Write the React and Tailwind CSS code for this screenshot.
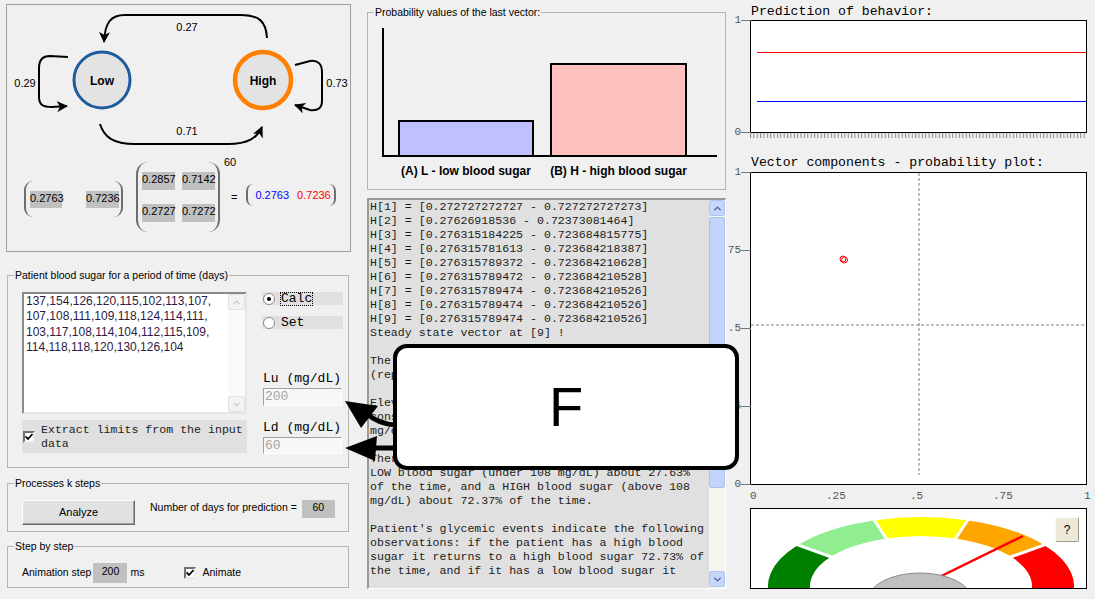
import { ChevronUp, ChevronDown } from 'lucide-react';

const sugarLines = [
  '137,154,126,120,115,102,113,107,',
  '107,108,111,109,118,124,114,111,',
  '103,117,108,114,104,112,115,109,',
  '114,118,118,120,130,126,104',
];

const logLines = [
  'H[1] = [0.272727272727 - 0.727272727273]',
  'H[2] = [0.27626918536 - 0.72373081464]',
  'H[3] = [0.276315184225 - 0.723684815775]',
  'H[4] = [0.276315781613 - 0.723684218387]',
  'H[5] = [0.276315789372 - 0.723684210628]',
  'H[6] = [0.276315789472 - 0.723684210528]',
  'H[7] = [0.276315789474 - 0.723684210526]',
  'H[8] = [0.276315789474 - 0.723684210526]',
  'H[9] = [0.276315789474 - 0.723684210526]',
  'Steady state vector at [9] !',
  '',
  'The steady state vector was reached quickly',
  '(representing the long-term behavior).',
  '',
  'Elevated blood sugar limit was calculated as',
  'considering the median of the input values: 108',
  'mg/dL.',
  '',
  'Therefore, the patient is expected to have a',
  'LOW blood sugar (under 108 mg/dL) about 27.63%',
  'of the time, and a HIGH blood sugar (above 108',
  'mg/dL) about 72.37% of the time.',
  '',
  "Patient's glycemic events indicate the following",
  'observations: if the patient has a high blood',
  'sugar it returns to a high blood sugar 72.73% of',
  'the time, and if it has a low blood sugar it',
];

function CheckBox() {
  return (
    <span className="w-[12px] h-[12px] bg-white border-2 border-t-[#707070] border-l-[#707070] border-r-[#e8e8e8] border-b-[#e8e8e8] flex items-center justify-center shrink-0">
      <svg width="8" height="8" viewBox="0 0 8 8">
        <path d="M0.5 3.5 L3 6 L7.5 1" stroke="#000" strokeWidth="1.8" fill="none" />
      </svg>
    </span>
  );
}

function Radio({ checked }) {
  return (
    <span className="w-[12px] h-[12px] rounded-full bg-white border border-[#8a8a8a] flex items-center justify-center shrink-0">
      {checked && <span className="w-[4px] h-[4px] rounded-full bg-black" />}
    </span>
  );
}

function Diagram() {
  return (
    <svg width="343" height="150" viewBox="7 5 343 150" className="shrink-0">
      <defs>
        <marker id="ah" viewBox="0 0 11 11" refX="10" refY="5.5" markerWidth="11" markerHeight="11" markerUnits="userSpaceOnUse" orient="auto">
          <path d="M0,0 L11,5.5 L0,11 L3,5.5 z" fill="#000" />
        </marker>
      </defs>
      <g fill="none" stroke="#000" strokeWidth="2">
        <path d="M267,38 C266,21 259,15 240,15 L125,15 C111,15 105,22 104,42" markerEnd="url(#ah)" />
        <path d="M100,124 C104,137 113,144 135,144 L228,144 C248,144 257,138 262,127" markerEnd="url(#ah)" />
        <path d="M68,57 L50,56 C42,56 39,60 39,68 L39,97 C39,105 43,107 52,107 L67,106" markerEnd="url(#ah)" />
        <path d="M295,65 L310,61 C318,60 322,64 322,72 L322,101 C322,108 318,111 310,110 L295,105" markerEnd="url(#ah)" />
      </g>
      <circle cx="102" cy="80" r="28" fill="#e3e3e3" stroke="#1e5b9c" strokeWidth="3" />
      <circle cx="263" cy="80" r="28" fill="#e3e3e3" stroke="#ff8000" strokeWidth="4.5" />
      <g fontSize="12" fontWeight="bold" textAnchor="middle">
        <text x="102" y="85">Low</text>
        <text x="263" y="85">High</text>
      </g>
      <g fontSize="11" textAnchor="middle">
        <text x="187" y="31">0.27</text>
        <text x="187" y="135">0.71</text>
        <text x="25" y="87">0.29</text>
        <text x="337" y="87">0.73</text>
      </g>
    </svg>
  );
}

function MatrixRow() {
  return (
    <div className="mt-[7px] h-[70px] pl-[17px] flex items-center text-[11px] leading-[14px]">
      <div className="mt-[4px] w-[99px] h-[36px] border-x-2 border-[#6e6e6e] rounded-[9px] flex items-center pl-[4px]">
        <div className="w-[32px] h-[17px] bg-[#c0c0c0]">0.2763</div>
        <div className="ml-[24px] w-[33px] h-[17px] bg-[#c0c0c0]">0.7236</div>
      </div>
      <div className="relative ml-[13px] w-[84px] h-[70px] border-x-2 border-[#6e6e6e] rounded-[12px] pt-[10px] pl-[4px] grid grid-cols-[33px_33px] gap-x-[7px] gap-y-[14px] content-start">
        <div className="h-[18px] bg-[#c0c0c0]">0.2857</div>
        <div className="h-[18px] bg-[#c0c0c0]">0.7142</div>
        <div className="h-[18px] bg-[#c0c0c0]">0.2727</div>
        <div className="h-[18px] bg-[#c0c0c0]">0.7272</div>
        <span className="absolute left-[86px] top-[-7px] text-[11px]">60</span>
      </div>
      <div className="ml-[11px]">=</div>
      <div className="ml-[9px] mb-[5px] w-[90px] h-[22px] border-x-2 border-[#6e6e6e] rounded-[7px] flex items-center pl-[7px]">
        <span className="text-[#0000ff]">0.2763</span>
        <span className="ml-[8px] text-[#ff0000]">0.7236</span>
      </div>
    </div>
  );
}

function Gauge() {
  const cx = 170, cy = 77;
  const pt = (rx, ry, deg) => [cx + rx * Math.cos((deg * Math.PI) / 180), cy - ry * Math.sin((deg * Math.PI) / 180)];
  const seg = (a1, a2) => {
    const [x1, y1] = pt(153, 69, a1);
    const [x2, y2] = pt(153, 69, a2);
    const [x3, y3] = pt(111, 50, a2);
    const [x4, y4] = pt(111, 50, a1);
    return `M${x1},${y1} A153,69 0 0 1 ${x2},${y2} L${x3},${y3} A111,50 0 0 0 ${x4},${y4} Z`;
  };
  const parts = [
    [195, 144, '#008000'],
    [144, 108, '#90ee90'],
    [108, 72, '#ffff00'],
    [72, 36, '#ffa500'],
    [36, -15, '#ff0000'],
  ];
  return (
    <svg width="335" height="79" className="block">
      {parts.map(([a, b, c]) => (
        <path key={c} d={seg(a, b)} fill={c} />
      ))}
      {[144, 108, 72, 36].map((a) => {
        const [x1, y1] = pt(108, 48, a);
        const [x2, y2] = pt(157, 72, a);
        return <line key={a} x1={x1} y1={y1} x2={x2} y2={y2} stroke="#fff" strokeWidth="3" />;
      })}
      <line x1="170" y1="77" x2="272" y2="27" stroke="#ff0000" strokeWidth="2.5" />
      <ellipse cx="169" cy="91" rx="52" ry="27" fill="#c0c0c0" stroke="#8c8c8c" />
    </svg>
  );
}

function YLabel({ top, text }) {
  return (
    <div className="absolute right-full -translate-y-1/2 flex items-center font-['Liberation_Mono',monospace] text-[11px] leading-[12px] text-[#555]" style={{ top }}>
      <span>{text}</span>
      <span className="w-[10px] h-[1px] bg-[#777]" />
    </div>
  );
}

export default function App() {
  return (
    <div className="relative w-[1095px] h-[599px] overflow-hidden bg-[#f0f0f0] flex font-['Liberation_Sans',Arial,sans-serif] text-black">
      {/* left column */}
      <div className="w-[345px] ml-[6px] mt-[4px] flex flex-col shrink-0">
        <div className="h-[248px] border border-[#a0a0a0] flex flex-col">
          <Diagram />
          <MatrixRow />
        </div>

        <fieldset className="mt-[16px] ml-[1px] mr-[2px] border border-[#b5b5ab] pb-[13px]">
          <legend className="ml-[6px] px-[1px] text-[10.5px] leading-[14px]">Patient blood sugar for a period of time (days)</legend>
          <div className="flex pl-[14px]">
            <div className="w-[225px]">
              <div className="mt-[10px] h-[122px] border-2 border-t-[#8a8a8a] border-l-[#8a8a8a] border-r-[#e6e6e6] border-b-[#e6e6e6] bg-white flex">
                <div className="flex-1 pl-[2px] text-[12px] leading-[15.3px] text-[#2f1a45]">
                  {sugarLines.map((l) => (
                    <div key={l}>{l}</div>
                  ))}
                </div>
                <div className="w-[17px] flex flex-col bg-[#fafaf8]">
                  <div className="h-[16px] rounded-[2px] border border-[#e2e2de] bg-[#f3f3f1] flex items-center justify-center">
                    <ChevronUp size={11} strokeWidth={2.5} className="text-[#c6c6c0]" />
                  </div>
                  <div className="flex-1" />
                  <div className="h-[16px] rounded-[2px] border border-[#e2e2de] bg-[#f3f3f1] flex items-center justify-center">
                    <ChevronDown size={11} strokeWidth={2.5} className="text-[#c6c6c0]" />
                  </div>
                </div>
              </div>
              <div className="mt-[6px] h-[33px] bg-[#e0e0e0] flex items-center pl-[1px]">
                <CheckBox />
                <div className="ml-[6px] font-['Liberation_Mono',monospace] text-[11.6px] leading-[14px] text-[#222]">
                  Extract limits from the input
                  <br />
                  data
                </div>
              </div>
            </div>
            <div className="ml-[15px] w-[81px] flex flex-col font-['Liberation_Mono',monospace] text-[13px]">
              <div className="mt-[10px] h-[13px] bg-[#e0e0e0] flex items-center pl-[1px]">
                <Radio checked />
                <span className="ml-[6px] leading-[12px] outline-1 outline-dotted outline-black">Calc</span>
              </div>
              <div className="mt-[11px] h-[13px] bg-[#e0e0e0] flex items-center pl-[1px]">
                <Radio />
                <span className="ml-[6px] leading-[12px]">Set</span>
              </div>
              <div className="mt-[42px] pl-[1px] leading-[16px]">Lu (mg/dL)</div>
              <div className="mt-[1px] ml-[1px] w-[79px] h-[18px] border border-t-[#a0a0a0] border-l-[#a0a0a0] border-r-white border-b-white bg-[#f7f7f7] pl-[1px] leading-[16px] text-[#a6a6a6]">200</div>
              <div className="mt-[14px] pl-[1px] leading-[16px]">Ld (mg/dL)</div>
              <div className="mt-[1px] ml-[1px] w-[79px] h-[17px] border border-t-[#a0a0a0] border-l-[#a0a0a0] border-r-white border-b-white bg-[#f7f7f7] pl-[1px] leading-[15px] text-[#a6a6a6]">60</div>
            </div>
          </div>
        </fieldset>

        <fieldset className="mt-[8px] ml-[1px] mr-[2px] border border-[#b5b5ab] pb-[6px]">
          <legend className="ml-[6px] px-[1px] text-[10.5px] leading-[14px]">Processes k steps</legend>
          <div className="mt-[10px] pl-[14px] flex items-start">
            <div className="w-[113px] h-[25px] bg-[#e1e1e1] border border-t-white border-l-white border-r-[#6a6a6a] border-b-[#6a6a6a] shadow-[inset_-1px_-1px_0_#a0a0a0] flex items-center justify-center text-[11px]">Analyze</div>
            <div className="ml-[15px] text-[10.5px] leading-[14px]">Number of days for prediction =</div>
            <div className="ml-[5px] w-[33px] h-[18px] bg-[#c0c0c0] text-center text-[10.5px] leading-[14px]">60</div>
          </div>
        </fieldset>

        <fieldset className="mt-[7px] ml-[1px] mr-[2px] border border-[#b5b5ab] pb-[4px]">
          <legend className="ml-[6px] px-[1px] text-[10.5px] leading-[14px]">Step by step</legend>
          <div className="mt-[10px] pl-[14px] h-[20px] flex items-center text-[10.5px]">
            <span>Animation step</span>
            <span className="ml-[2px] w-[34px] h-[20px] bg-[#c0c0c0] text-center leading-[16px]">200</span>
            <span className="ml-[3px]">ms</span>
            <span className="ml-[40px]"><CheckBox /></span>
            <span className="ml-[6px]">Animate</span>
          </div>
        </fieldset>
      </div>

      {/* middle column */}
      <div className="w-[360px] ml-[15px] flex flex-col shrink-0 relative z-10">
        <fieldset className="mt-[5px] ml-[1px] h-[185px] border border-[#b5b5ab]">
          <legend className="ml-[6px] px-[1px] text-[10.5px] leading-[14px]">Probability values of the last vector:</legend>
          <div className="ml-[14px] mt-[9px] w-[335px] h-[129px] border-l-2 border-b-2 border-black flex items-end pl-[14px] gap-[16px]">
            <div className="w-[136px] h-[35px] bg-[#c0c0ff] border-2 border-b-0 border-black" />
            <div className="w-[137px] h-[92px] bg-[#ffc0c0] border-2 border-b-0 border-black" />
          </div>
          <div className="mt-[7px] pl-[30px] flex gap-[16px] text-[12px] leading-[14px] font-bold whitespace-nowrap">
            <div className="w-[136px] text-center">(A) L - low blood sugar</div>
            <div className="w-[137px] text-center">(B) H - high blood sugar</div>
          </div>
        </fieldset>

        <div className="mt-[8px] ml-[1px] w-[359px] h-[391px] border-t-2 border-l-2 border-[#9a9a9a] border-r border-b border-r-white border-b-white bg-[#e0e0e0] flex overflow-hidden">
          <div className="flex-1 pl-[1px] font-['Liberation_Mono',monospace] text-[11.6px] leading-[14px] text-[#1c1c1c] whitespace-pre overflow-hidden">
            {logLines.map((l, i) => (
              <div key={i} className="h-[14px]">{l}</div>
            ))}
          </div>
          <div className="w-[16px] flex flex-col bg-[#f6f5ef]">
            <div className="h-[16px] rounded-[2px] bg-[#c6d5fa] border border-[#b0c5f3] flex items-center justify-center">
              <ChevronUp size={11} strokeWidth={3} className="text-[#4d6185]" />
            </div>
            <div className="mt-[1px] h-[271px] rounded-[2px] bg-[#c3d4fc] border border-[#aac0ef]" />
            <div className="flex-1" />
            <div className="mb-[1px] h-[16px] rounded-[2px] bg-[#c6d5fa] border border-[#b0c5f3] flex items-center justify-center">
              <ChevronDown size={11} strokeWidth={3} className="text-[#4d6185]" />
            </div>
          </div>
        </div>
      </div>

      {/* right column */}
      <div className="ml-[14px] w-[355px] flex flex-col shrink-0">
        <div className="mt-[4px] pl-[11px] font-['Liberation_Mono',monospace] text-[13.2px] leading-[16px]">Prediction of behavior:</div>
        <div className="relative ml-[10px] w-[337px] h-[113px] border border-black bg-white">
          <svg width="335" height="111" className="block" shapeRendering="crispEdges">
            <line x1="6" y1="31.5" x2="335" y2="31.5" stroke="#ff0000" strokeWidth="1" />
            <line x1="6" y1="80.5" x2="335" y2="80.5" stroke="#0000ff" strokeWidth="1" />
          </svg>
          <YLabel top={-1} text="1" />
          <YLabel top={111} text="0" />
        </div>
        <svg width="337" height="5" className="ml-[10px] block">
          <defs>
            <pattern id="tk" width="3.37" height="5" patternUnits="userSpaceOnUse">
              <rect x="0" y="0" width="1" height="5" fill="#8a8a8a" />
            </pattern>
          </defs>
          <rect width="337" height="5" fill="url(#tk)" />
        </svg>

        <div className="mt-[17px] pl-[11px] font-['Liberation_Mono',monospace] text-[13.2px] leading-[16px]">Vector components - probability plot:</div>
        <div className="relative mt-[1px] ml-[10px] w-[337px] h-[313px] border border-black bg-white">
          <svg width="335" height="311" className="block">
            <line x1="168" y1="0" x2="168" y2="302" stroke="#808080" strokeDasharray="3 2" />
            <line x1="0" y1="152" x2="335" y2="152" stroke="#808080" strokeDasharray="3 2" />
            <circle cx="92" cy="86" r="3" fill="none" stroke="#ff0000" />
            <circle cx="93.5" cy="87" r="3" fill="none" stroke="#ff0000" />
          </svg>
          <YLabel top={-1} text="1" />
          <YLabel top={77} text=".75" />
          <YLabel top={155} text=".5" />
          <YLabel top={233} text=".25" />
          <YLabel top={311} text="0" />
          <div className="absolute top-[315px] left-0 w-[337px] h-[16px] font-['Liberation_Mono',monospace] text-[11px] leading-[16px] text-[#555]">
            <span className="absolute left-[-1px]">0</span>
            <span className="absolute left-[75px]">.25</span>
            <span className="absolute left-[159px]">.5</span>
            <span className="absolute left-[242px]">.75</span>
            <span className="absolute left-[333px]">1</span>
          </div>
        </div>

        <div className="relative mt-[23px] ml-[10px] w-[337px] h-[81px] border border-black bg-white overflow-hidden">
          <Gauge />
          <div className="absolute left-[304px] top-[8px] w-[24px] h-[25px] bg-[#ece9d8] border border-t-[#fbfaf5] border-l-[#fbfaf5] border-r-[#9d9a8c] border-b-[#9d9a8c] rounded-[2px] flex items-center justify-center text-[12px]">?</div>
        </div>
      </div>

      {/* callout overlay */}
      <svg className="absolute left-0 top-0 z-20 pointer-events-none" width="1095" height="599">
        <path d="M396,425 Q378,424 366,413" stroke="#000" strokeWidth="5" fill="none" />
        <polygon points="345,401 378,406 361,428" fill="#000" />
        <line x1="372" y1="448" x2="396" y2="448" stroke="#000" strokeWidth="5" />
        <polygon points="345,448 377,436 375,461" fill="#000" />
      </svg>
      <div className="absolute left-[393px] top-[344px] z-30 w-[346px] h-[126px] bg-white border-4 border-black rounded-[14px] flex items-center justify-center text-[56px] leading-none">F</div>
    </div>
  );
}
